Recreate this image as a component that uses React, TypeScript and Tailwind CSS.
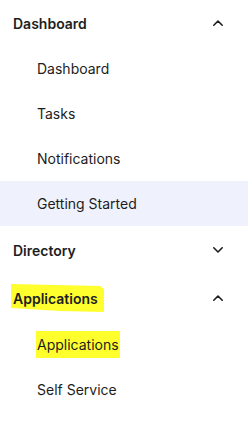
import React from "react";

const font = { fontFamily: "Inter, 'Liberation Sans', sans-serif" };

function ChevronUp() {
  return (
    <svg width="12" height="8" viewBox="0 0 12 8" fill="none">
      <path d="M1.8 6.2L6 2L10.2 6.2" stroke="#1d1d21" strokeWidth="1.6" strokeLinecap="round" strokeLinejoin="round" />
    </svg>
  );
}
function ChevronDown() {
  return (
    <svg width="12" height="8" viewBox="0 0 12 8" fill="none">
      <path d="M1.8 1.8L6 6L10.2 1.8" stroke="#1d1d21" strokeWidth="1.6" strokeLinecap="round" strokeLinejoin="round" />
    </svg>
  );
}

function Header({ label, open, highlight, h }: { label: string; open: boolean; highlight?: boolean; h: string }) {
  return (
    <div className={`relative flex items-center justify-between pl-[13px] pr-[24px] ${h}`}>
      {highlight && (
        <svg className="absolute left-0 top-0" width="120" height="48" viewBox="0 0 120 48">
          <polygon points="11,10 100,12 104,15 104,38 60,37 11,34" fill="#ffff2e" />
        </svg>
      )}
      <span className="relative text-[14px] font-semibold text-[#1d1d21]">{label}</span>
      {open ? <ChevronUp /> : <ChevronDown />}
    </div>
  );
}

function Item({ label, active, highlight }: { label: string; active?: boolean; highlight?: boolean }) {
  return (
    <div className={`flex h-[45px] items-center pl-[37px] ${active ? "bg-[#eff2fd]" : ""}`}>
      <span className={`text-[14px] text-[#1d1d21] ${highlight ? "bg-[#ffff2e] -mx-[1px] px-[1px] py-[3px]" : ""}`}>{label}</span>
    </div>
  );
}

export default function App() {
  return (
    <div className="w-[248px] h-[430px] bg-white" style={font}>
      <Header label="Dashboard" open h="h-[46px]" />
      <Item label="Dashboard" />
      <Item label="Tasks" />
      <Item label="Notifications" />
      <Item label="Getting Started" active />
      <Header label="Directory" open={false} h="h-[48px]" />
      <Header label="Applications" open highlight h="h-[48px]" />
      <Item label="Applications" highlight />
      <Item label="Self Service" />
    </div>
  );
}
